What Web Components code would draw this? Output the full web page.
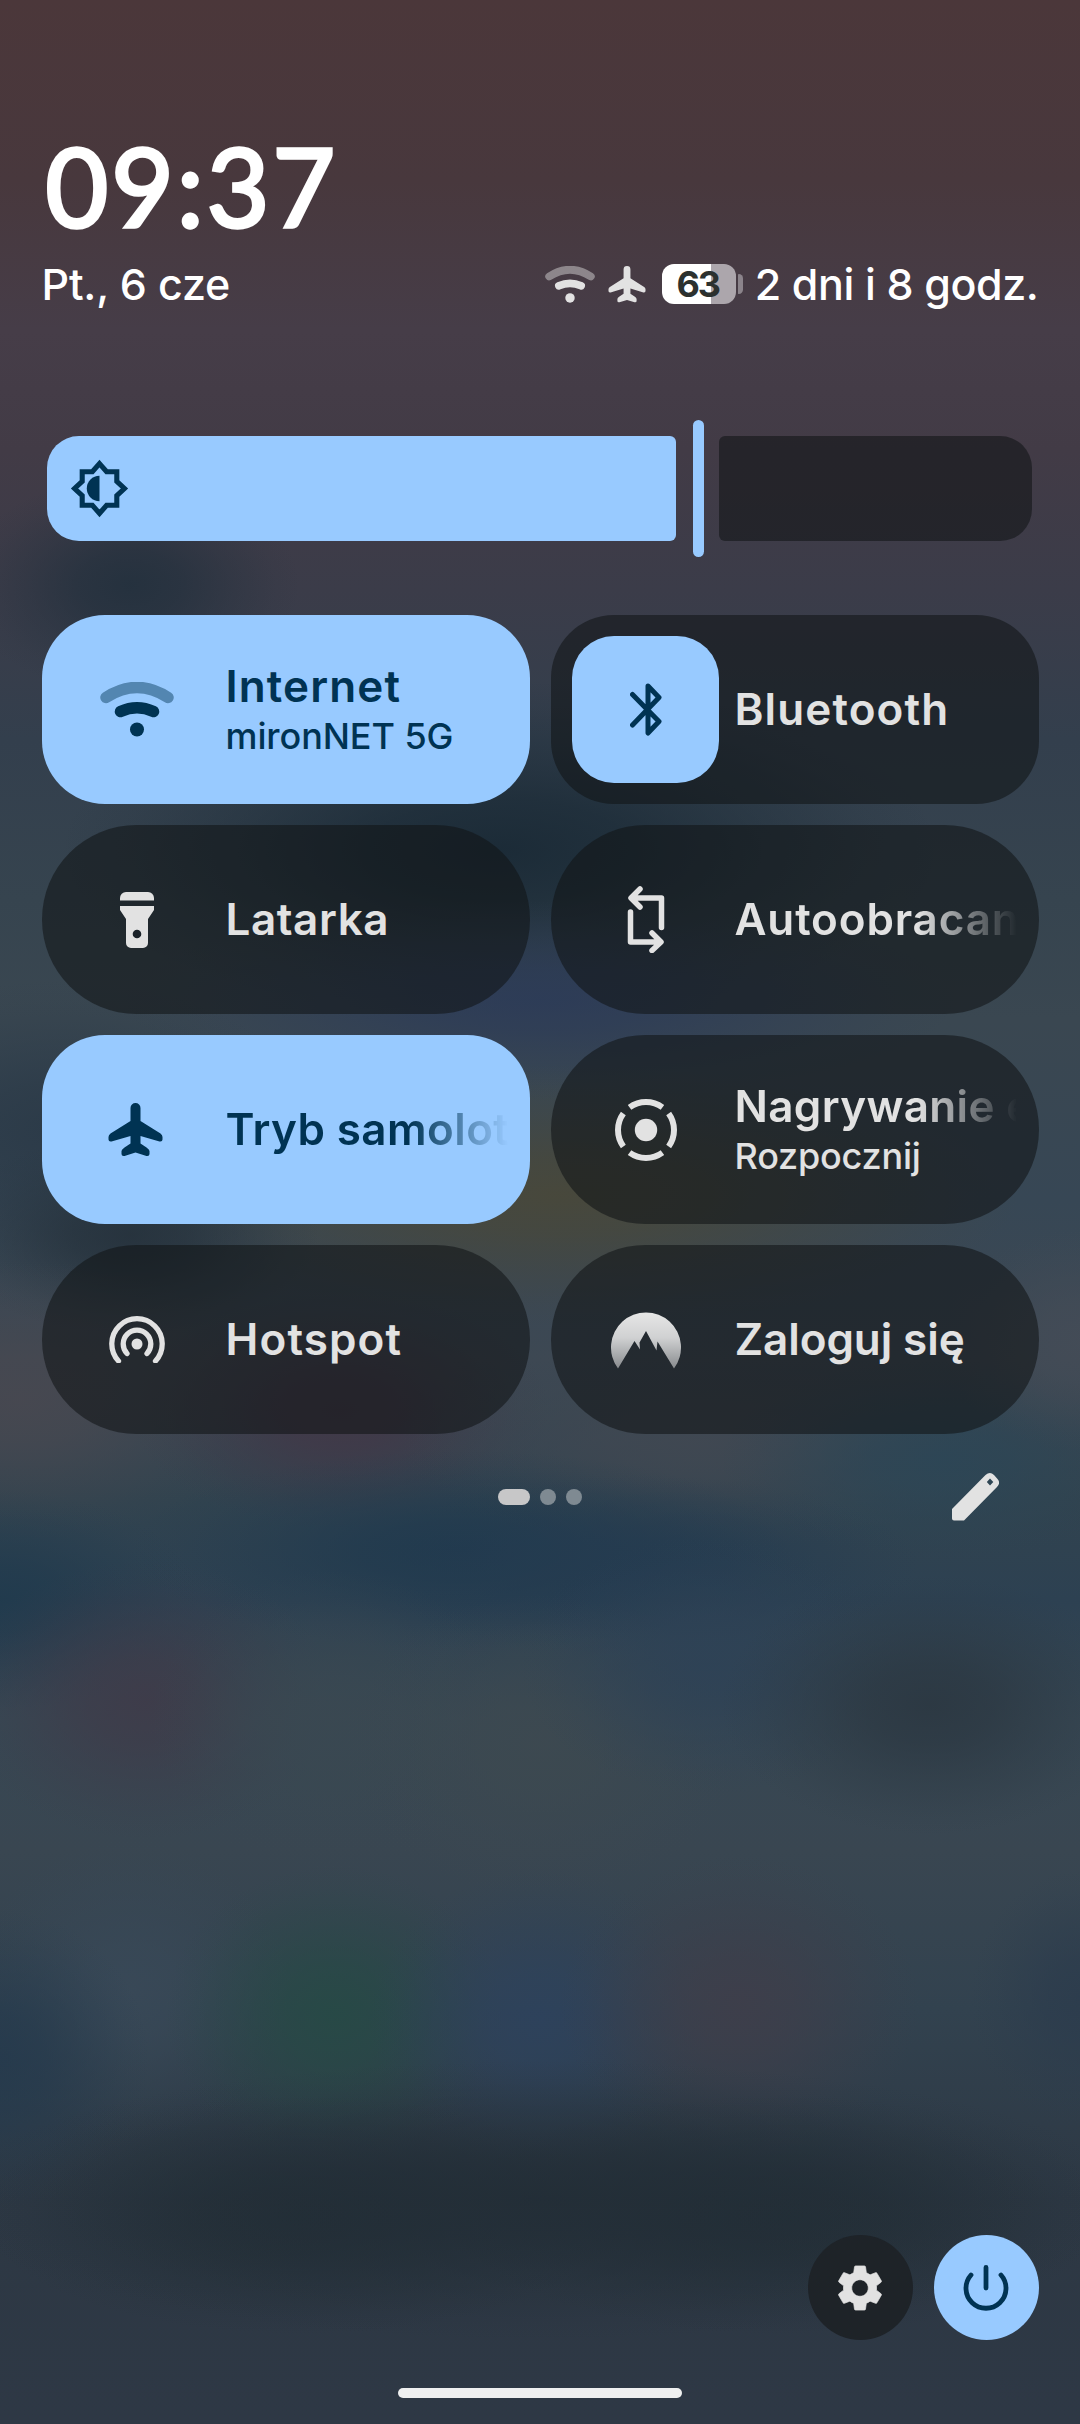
<!DOCTYPE html>
<html lang="pl">
<head>
<meta charset="utf-8">
<title>Szybkie ustawienia</title>
<style>
    html, body {
        margin: 0;
        padding: 0;
        width: 1080px;
        height: 2424px;
        overflow: hidden;
        background: #34414d;
    }
</style>
</head>
<body>
<qs-shade>
    <qs-header>
        <fit-text slot="clock" width="293">09:37</fit-text>
        <fit-text slot="date" width="189">Pt., 6 cze</fit-text>
        <qs-icon slot="status" name="wifi" style="width:50px;height:37px"></qs-icon>
        <qs-icon slot="status" name="plane" style="width:38px;height:37px;margin-left:13px"></qs-icon>
        <qs-battery slot="status" level="63"></qs-battery>
        <fit-text slot="status" width="284" style="margin-left:12px">2 dni i 8 godz.</fit-text>
    </qs-header>

    <qs-slider></qs-slider>

    <qs-grid>
        <qs-tile on icon="wifi" size="74x55">
            <fit-text width="176">Internet</fit-text>
            <fit-text slot="sub" width="228">mironNET 5G</fit-text>
        </qs-tile>
        <qs-tile split icon="bluetooth" size="32x53">
            <fit-text width="215">Bluetooth</fit-text>
        </qs-tile>
        <qs-tile icon="torch" size="34x56">
            <fit-text width="164">Latarka</fit-text>
        </qs-tile>
        <qs-tile fade icon="rotate" size="38x67">
            <fit-text width="324">Autoobracanie</fit-text>
        </qs-tile>
        <qs-tile on fade icon="plane" size="55x54" nudge="-2">
            <fit-text width="373">Tryb samolotowy</fit-text>
        </qs-tile>
        <qs-tile fade icon="record" size="62x62">
            <fit-text width="421">Nagrywanie ekranu</fit-text>
            <fit-text slot="sub" width="186">Rozpocznij</fit-text>
        </qs-tile>
        <qs-tile icon="hotspot" size="56x47">
            <fit-text width="177">Hotspot</fit-text>
        </qs-tile>
        <qs-tile icon="mountain" size="70x58">
            <fit-text width="230">Zaloguj się</fit-text>
        </qs-tile>
    </qs-grid>

    <qs-pager pages="3"></qs-pager>
    <qs-footer></qs-footer>
</qs-shade>

<script>
const ICONS = {
    wifi: ['0 0 74 55', `
        <path d="M6 15.5 Q37 -4.5 68 15.5" fill="none" stroke="currentColor" stroke-width="11.5" stroke-linecap="round" opacity=".45"/>
        <path d="M20.5 29.5 Q37 22 53.5 29.5" fill="none" stroke="currentColor" stroke-width="11.5" stroke-linecap="round"/>
        <circle cx="37" cy="47.5" r="7" fill="currentColor"/>`],
    plane: ['0 0 55 54', `
        <path fill="currentColor" d="M27.5 0a5 5 0 0 1 5 5v13l20 12.500q2 1.500 2 3.500v2.500q0 2.500-3 2l-19-5.500v7.500l6 4q3 2 3 3.500v3q0 2.500-3 2l-11-3.500-11 3.500q-3 .500-3-2v-3q0-1.500 3-3.500l6-4v-7.500l-19 5.500q-3 .500-3-2v-2.500q0-2 2-3.500l20-12.500v-13a5 5 0 0 1 5-5z"/>`],
    sun: ['0 0 58 58', `
        <path d="M29 4.500 36 12.500H46V22L53.500 29 46 36V45.500H36L29 53.500 22 45.500H12V36L4.500 29 12 22V12.500H22Z" fill="none" stroke="currentColor" stroke-width="5"/>
        <path d="M29 16.500a12.500 12.500 0 0 0 0 25z" fill="currentColor"/>`],
    bluetooth: ['0 0 32 53', `
        <path d="M2.500 11.500 29 38.500 18 50V3L29 14.500 2.500 42" fill="none" stroke="currentColor" stroke-width="5" stroke-linecap="round" stroke-linejoin="round"/>`],
    torch: ['0 0 34 56', `
        <path fill="currentColor" d="M6 0H28a6 6 0 0 1 6 6V8.500H0V6A6 6 0 0 1 6 0ZM0 14H34V18L28 27V51a5 5 0 0 1-5 5H11a5 5 0 0 1-5-5V27L0 18Z"/>
        <circle cx="17" cy="42" r="4.300" fill="#1a2229"/>`],
    rotate: ['0 0 38 67', `
        <path d="M13 3 4 12 13 21M6 12H34.500V41.500M25 47 34 56 25 64.500M32 56H3.500V26" fill="none" stroke="currentColor" stroke-width="5.500" stroke-linecap="round" stroke-linejoin="round"/>`],
    record: ['0 0 62 62', `
        <circle cx="31" cy="31" r="11.200" fill="currentColor"/>
        <circle cx="31" cy="31" r="28" fill="none" stroke="currentColor" stroke-width="6" pathLength="360" stroke-dasharray="72 18" stroke-dashoffset="36"/>`],
    hotspot: ['0 0 56 47', `
        <circle cx="28" cy="28" r="5.500" fill="currentColor"/>
        <path d="M18 37.500A13.800 13.800 0 1 1 38 37.500M9.500 45A25.200 25.200 0 1 1 46.500 45" fill="none" stroke="currentColor" stroke-width="5.300" stroke-linecap="round"/>`],
    mountain: ['0 0 70 58', `
        <defs><linearGradient id="g" x1="0" y1="0" x2="0" y2="1">
            <stop offset="0" stop-color="#e6e6e6"/><stop offset=".45" stop-color="#d0d1d2"/><stop offset="1" stop-color="#888b8e"/>
        </linearGradient></defs>
        <path fill="url(#g)" d="M7 57.500A35 35 0 1 1 63 57.500L46.500 30.500 45.500 39.500 35 20 28.500 31.500 29 38.500 23.500 30Z"/>`],
    pencil: ['0 0 47 48', `
        <path fill="currentColor" fill-rule="evenodd" d="M0 36 33.500 2Q38-2 42 2L45.500 6Q49 10 45 14L12 47.500H2Q0 47.500 0 45.500ZM38 5.500 34.800 9 38 12.500 41.300 9Z"/>`],
    gear: ['2 2 20 20', `
        <path fill="currentColor" stroke="currentColor" stroke-width=".3" stroke-linejoin="round" d="M19.140 12.940c.040-.300.060-.610.060-.940 0-.320-.020-.640-.070-.940l2.030-1.580c.180-.140.230-.410.120-.610l-1.920-3.320c-.120-.220-.370-.290-.590-.220l-2.390.960c-.500-.380-1.030-.700-1.620-.940l-.360-2.540c-.040-.240-.240-.410-.480-.410h-3.840c-.240 0-.430.170-.470.410l-.360 2.540c-.590.240-1.130.570-1.620.940l-2.390-.960c-.220-.080-.470 0-.590.220L2.740 8.870c-.120.210-.080.470.120.610l2.030 1.580c-.050.300-.090.630-.090.940s.020.640.070.940l-2.030 1.580c-.180.140-.230.410-.120.610l1.920 3.320c.120.220.370.290.590.220l2.390-.960c.500.380 1.030.700 1.620.940l.360 2.540c.050.240.240.410.480.410h3.840c.240 0 .440-.170.470-.410l.360-2.540c.590-.240 1.130-.560 1.620-.940l2.390.960c.220.080.470 0 .590-.220l1.920-3.320c.120-.220.070-.470-.120-.610l-2.010-1.580zM12 15.600c-1.980 0-3.600-1.620-3.600-3.600s1.620-3.600 3.600-3.600 3.600 1.620 3.600 3.600-1.620 3.600-3.600 3.600z"/>`],
    power: ['0 0 46 46', `
        <path d="M8 10A20 20 0 1 0 38 10M23 2.500V23" fill="none" stroke="currentColor" stroke-width="4.800" stroke-linecap="round"/>`]
};

class QsIcon extends HTMLElement {
    constructor() {
        super();
        const shadow = this.attachShadow({ mode: 'open' });
        const [box, body] = ICONS[this.getAttribute('name')];
        shadow.innerHTML = `
            <style>
                :host { display: block; flex: none; }
                svg { display: block; width: 100%; height: 100%; }
            </style>
            <svg viewBox="${box}">${body}</svg>
        `;
    }
}

// one line of text, tracked so that it takes the given width
class FitText extends HTMLElement {
    constructor() {
        super();
        const shadow = this.attachShadow({ mode: 'open' });
        shadow.innerHTML = `
            <style>
                :host { display: block; white-space: nowrap; }
                span { display: inline-block; white-space: nowrap; }
            </style>
            <span><slot></slot></span>
        `;
    }

    fit() {
        const span = this.shadowRoot.querySelector('span');
        const gap = (Number(this.getAttribute('width')) - span.offsetWidth) / this.textContent.length;
        span.style.letterSpacing = gap.toFixed(2) + 'px';
    }
}

class QsBattery extends HTMLElement {
    constructor() {
        super();
        const shadow = this.attachShadow({ mode: 'open' });
        const level = this.getAttribute('level');
        shadow.innerHTML = `
            <style>
                :host { display: flex; align-items: center; gap: 2px; margin-left: 16px; }
                .cell {
                    width: 74px;
                    height: 40px;
                    border-radius: 12px;
                    background: linear-gradient(90deg, #fff 66%, #aca6ac 66%);
                    color: #2c312f;
                    font: 700 36px/40px Inter, sans-serif;
                    letter-spacing: -2px;
                    text-indent: -2px;
                    text-align: center;
                }
                .nub { width: 5px; height: 20px; border-radius: 1px 5px 5px 1px; background: #8b848b; }
            </style>
            <div class="cell">${level}</div>
            <div class="nub"></div>
        `;
    }
}

class QsHeader extends HTMLElement {
    constructor() {
        super();
        const shadow = this.attachShadow({ mode: 'open' });
        shadow.innerHTML = `
            <style>
                :host { display: block; height: 311px; padding-top: 122px; box-sizing: border-box; color: #fff; }
                .clock { height: 127px; font: 400 108px/126px Lato, sans-serif; -webkit-text-stroke: 3.500px #fff; padding-left: 4px; }
                .row { display: flex; align-items: center; height: 70px; font: 500 43px/70px Inter, sans-serif; }
                .status { display: flex; align-items: center; margin-left: auto; }
                ::slotted(qs-icon) { color: #e2e2e2; }
            </style>
            <div class="clock"><slot name="clock"></slot></div>
            <div class="row">
                <slot name="date"></slot>
                <div class="status"><slot name="status"></slot></div>
            </div>
        `;
    }
}

class QsSlider extends HTMLElement {
    constructor() {
        super();
        const shadow = this.attachShadow({ mode: 'open' });
        shadow.innerHTML = `
            <style>
                :host { display: flex; align-items: center; height: 137px; margin-top: 109px; padding: 0 7px 0 5px; }
                .fill, .rest { height: 105px; box-sizing: border-box; }
                .fill {
                    width: 629px;
                    display: flex;
                    align-items: center;
                    padding-left: 23px;
                    border-radius: 32px 6px 6px 32px;
                    background: #98caff;
                    color: #003353;
                }
                .thumb { width: 11px; height: 137px; margin: 0 15px 0 17px; border-radius: 6px; background: #98caff; }
                .rest { flex: 1; border-radius: 6px 32px 32px 6px; background: rgba(18, 20, 22, .58); }
                qs-icon { width: 59px; height: 59px; }
            </style>
            <div class="fill"><qs-icon name="sun"></qs-icon></div>
            <div class="thumb"></div>
            <div class="rest"></div>
        `;
    }
}

class QsGrid extends HTMLElement {
    constructor() {
        super();
        const shadow = this.attachShadow({ mode: 'open' });
        shadow.innerHTML = `
            <style>
                :host {
                    display: grid;
                    grid-template-columns: 1fr 1fr;
                    grid-auto-rows: 189px;
                    gap: 21px;
                    margin-top: 58px;
                }
            </style>
            <slot></slot>
        `;
    }
}

class QsTile extends HTMLElement {
    constructor() {
        super();
        const shadow = this.attachShadow({ mode: 'open' });
        const [w, h] = this.getAttribute('size').split('x');
        const nudge = Number(this.getAttribute('nudge') || 0);
        shadow.innerHTML = `
            <style>
                :host {
                    display: flex;
                    align-items: center;
                    box-sizing: border-box;
                    padding: 0 22px 0 21px;
                    border-radius: 94.500px;
                    background: rgba(18, 20, 22, .58);
                    color: #e2e2e2;
                    overflow: hidden;
                }
                :host([on]) { border-radius: 63px; background: #98caff; color: #003353; }
                :host([split]) { border-radius: 63px; }
                .icon {
                    flex: none;
                    width: 147px;
                    height: 147px;
                    display: flex;
                    align-items: center;
                    justify-content: center;
                    border-radius: 42px;
                }
                :host([split]) .icon { background: #98caff; color: #003353; }
                .text {
                    flex: 1;
                    min-width: 0;
                    margin: -2px 0 0 16px;
                    overflow: hidden;
                }
                :host([fade]) .label {
                    -webkit-mask-image: linear-gradient(90deg, #000 calc(100% - 100px), transparent);
                    mask-image: linear-gradient(90deg, #000 calc(100% - 100px), transparent);
                }
                .label { font: 600 44px/54px Inter, sans-serif; }
                .sub { font: 500 36px/46px Inter, sans-serif; }
                qs-icon { width: ${w}px; height: ${h}px; margin-left: ${nudge * 2 + 2}px; }
            </style>
            <div class="icon"><qs-icon name="${this.getAttribute('icon')}"></qs-icon></div>
            <div class="text">
                <div class="label"><slot></slot></div>
                <div class="sub"><slot name="sub"></slot></div>
            </div>
        `;
    }
}

class QsPager extends HTMLElement {
    constructor() {
        super();
        const shadow = this.attachShadow({ mode: 'open' });
        const rest = '<i></i>'.repeat(this.getAttribute('pages') - 1);
        shadow.innerHTML = `
            <style>
                :host { display: grid; grid-template-columns: 1fr auto 1fr; align-items: center; height: 126px; }
                .dots { grid-column: 2; display: flex; gap: 10px; }
                i { width: 16px; height: 16px; border-radius: 8px; background: #7f8a92; }
                i.now { width: 32px; background: #c7c7c8; }
                qs-icon { justify-self: end; width: 47px; height: 48px; margin-right: 40px; color: #e2e2e2; }
            </style>
            <div class="dots"><i class="now"></i>${rest}</div>
            <qs-icon name="pencil"></qs-icon>
        `;
    }
}

class QsFooter extends HTMLElement {
    constructor() {
        super();
        const shadow = this.attachShadow({ mode: 'open' });
        shadow.innerHTML = `
            <style>
                :host { display: flex; flex-direction: column; margin-top: auto; height: 189px; }
                .actions { display: flex; justify-content: flex-end; gap: 21px; }
                .round {
                    width: 105px;
                    height: 105px;
                    display: flex;
                    align-items: center;
                    justify-content: center;
                    border-radius: 50%;
                    background: #1e2328;
                    color: #e2e2e2;
                }
                .round.on { background: #98caff; color: #003353; }
                .round qs-icon { width: 46px; height: 46px; }
                .bar { width: 284px; height: 10px; margin: 48px auto 0; border-radius: 5px; background: #eff0f0; }
            </style>
            <div class="actions">
                <div class="round"><qs-icon name="gear"></qs-icon></div>
                <div class="round on"><qs-icon name="power"></qs-icon></div>
            </div>
            <div class="bar"></div>
        `;
    }
}

// blurred wallpaper spots: x, y, x radius, y radius, colour
const SPOTS = [
    [130, 585, 170, 110, '#22303d'],
    [500, 850, 440, 170, '#182834'],
    [540, 1000, 420, 100, '#2c3b58'],
    [60, 1130, 260, 150, '#2a3947'],
    [560, 1195, 460, 130, '#4a4838'],
    [130, 1235, 190, 100, '#25313b'],
    [20, 1400, 260, 140, '#484850'],
    [340, 1410, 210, 120, '#433646'],
    [700, 1440, 300, 110, '#414852'],
    [940, 1460, 220, 100, '#2c4656'],
    [1080, 1340, 140, 110, '#444c57'],
    [460, 1550, 330, 100, '#1f394e'],
    [640, 1565, 280, 90, '#243b50'],
    [0, 1600, 200, 110, '#203a4d'],
    [145, 1700, 190, 140, '#3f3b49'],
    [330, 1720, 180, 150, '#3a4851'],
    [540, 1745, 200, 150, '#3d4950'],
    [710, 1665, 190, 130, '#2e4256'],
    [930, 1705, 210, 130, '#2b3741'],
    [130, 1990, 160, 150, '#394958'],
    [335, 2015, 170, 150, '#264a45'],
    [540, 2020, 170, 150, '#2d425d'],
    [740, 2005, 180, 150, '#3f3e4a'],
    [0, 2060, 150, 150, '#253a4d'],
    [1080, 2000, 110, 130, '#2c3c4d'],
    [300, 2215, 320, 120, '#222e36'],
    [780, 2215, 330, 120, '#222e36'],
    [540, 2200, 600, 140, '#222d36']
];

class QsShade extends HTMLElement {
    constructor() {
        super();
        const shadow = this.attachShadow({ mode: 'open' });
        const spots = SPOTS.slice().reverse().map(([x, y, rx, ry, c]) =>
            `radial-gradient(${rx}px ${ry}px at ${x}px ${y}px, ${c}e0 0%, ${c}b0 30%, ${c}58 60%, ${c}18 85%, ${c}00 100%)`);
        shadow.innerHTML = `
            <style>
                :host {
                    display: flex;
                    flex-direction: column;
                    box-sizing: border-box;
                    width: 1080px;
                    height: 2424px;
                    padding: 0 41.500px;
                    background: ${spots.join(',')},
                        linear-gradient(180deg, #4b373a 0, #48383d 180px, #463d48 330px, #423b46 450px,
                        #3b3c49 590px, #333f4d 740px, #36444f 900px, #3a4751 1020px, #374755 1200px,
                        #3d4853 1360px, #31434f 1500px, #2d4152 1600px, #374753 1720px, #394651 1850px,
                        #32424f 2010px, #2d3844 2200px, #2e3845 2424px);
                }
            </style>
            <slot></slot>
        `;
    }
}

customElements.define('qs-icon', QsIcon);
customElements.define('fit-text', FitText);
customElements.define('qs-battery', QsBattery);
customElements.define('qs-header', QsHeader);
customElements.define('qs-slider', QsSlider);
customElements.define('qs-grid', QsGrid);
customElements.define('qs-tile', QsTile);
customElements.define('qs-pager', QsPager);
customElements.define('qs-footer', QsFooter);
customElements.define('qs-shade', QsShade);

// every parent is styled by now, so the widths can be measured
document.querySelectorAll('fit-text').forEach(el => el.fit());
</script>
</body>
</html>
